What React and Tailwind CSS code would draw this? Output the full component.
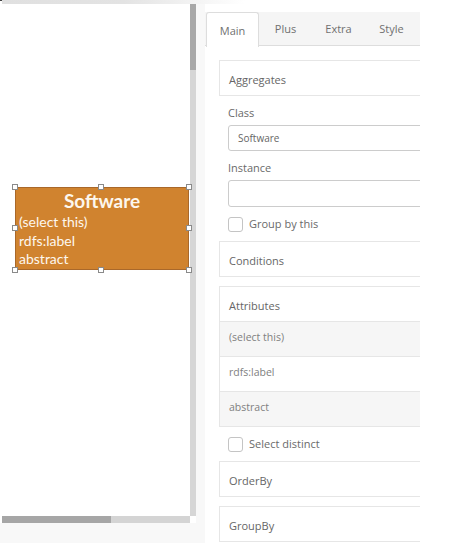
function Handle({ className }) {
  return <div className={`absolute w-[6px] h-[6px] bg-white border border-[#8a8a8a] ${className}`} />;
}

function Section({ label }) {
  return (
    <div className="h-[36px] w-[260px] border border-[#e6e6e6] bg-white flex items-center pl-[9px] pt-[5px] text-[11px] text-[#666]">
      {label}
    </div>
  );
}

function Check({ label }) {
  return (
    <div className="flex items-center h-[15px] pl-[9px]">
      <div className="w-[15px] h-[15px] border border-[#c4c4c4] rounded-[3px] bg-white" />
      <span className="ml-[6px] text-[11px] text-[#6a6a6a]">{label}</span>
    </div>
  );
}

export default function App() {
  const tabs = ['Main', 'Plus', 'Extra', 'Style'];
  const rows = ['(select this)', 'rdfs:label', 'abstract'];

  return (
    <div className="w-[459px] h-[551px] bg-white overflow-hidden font-['Open_Sans',sans-serif]">
      <div className="flex h-[4px]">
        <div className="w-[2px] h-[1px] bg-[#444]" />
        <div className="w-[243px] h-full bg-linear-to-r from-[#e0e0e0] via-[#e3e3e3] to-transparent" />
      </div>

      <div className="flex">
        {/* canvas column */}
        <div className="w-[205px] h-[539px] bg-[#f8f8f8] flex flex-col">
          <div className="flex h-[512px]">
            <div className="w-[190px] h-full bg-white relative">
              <div className="absolute left-[15px] top-[183px] w-[174px] h-[83px] bg-[#d0832f] border border-[#a9682a] font-['Lato',sans-serif] text-[#fdf7ee]">
                <div className="pt-[1px] leading-[23px] text-center text-[19px] font-bold">Software</div>
                <div className="pt-[1px] pl-[3px] text-[14px] leading-[18.5px]">
                  <div>(select this)</div>
                  <div>rdfs:label</div>
                  <div>abstract</div>
                </div>
                <Handle className="-left-[4px] -top-[4px]" />
                <Handle className="left-[82px] -top-[4px]" />
                <Handle className="-right-[4px] -top-[4px]" />
                <Handle className="-left-[4px] top-[37px]" />
                <Handle className="-right-[4px] top-[37px]" />
                <Handle className="-left-[4px] -bottom-[4px]" />
                <Handle className="left-[82px] -bottom-[4px]" />
                <Handle className="-right-[4px] -bottom-[4px]" />
              </div>
            </div>
            <div className="w-[6px] h-full flex flex-col">
              <div className="h-[66px] bg-[#a8a8a8]" />
              <div className="flex-1 bg-[#d6d6d6]" />
            </div>
          </div>
          <div className="flex h-[7px]">
            <div className="w-[2px] bg-white" />
            <div className="w-[109px] bg-[#a6a6a6]" />
            <div className="w-[79px] bg-[#d4d4d4]" />
            <div className="w-[6px] bg-white" />
          </div>
        </div>

        {/* properties panel */}
        <div className="w-[215px] h-[547px] pt-[8px] overflow-hidden">
          <div className="flex h-[34px] bg-[#f5f5f5] border-b border-[#dddddd]">
            {tabs.map((t, i) => (
              <div
                key={t}
                className={`w-[53px] flex items-center justify-center pt-[2px] text-[11px] text-[#707070] ${
                  i === 0 ? 'ml-[1px] bg-white border border-b-0 border-[#dddddd] rounded-t-[3px] h-[35px]' : ''
                }`}
              >
                {t}
              </div>
            ))}
          </div>

          <div className="pl-[14px] pt-[14px] flex flex-col">
            <Section label="Aggregates" />

            <div className="pl-[9px] mt-[9px] leading-[16px] text-[11px] text-[#6a6a6a]">Class</div>
            <div className="ml-[9px] mt-[4px] w-[240px] h-[26px] border border-[#cccccc] rounded-[3px] bg-white flex items-center pl-[9px] text-[10px] text-[#666]">
              Software
            </div>
            <div className="pl-[9px] mt-[9px] leading-[16px] text-[11px] text-[#6a6a6a]">Instance</div>
            <div className="ml-[9px] mt-[4px] w-[240px] h-[27px] border border-[#cccccc] rounded-[3px] bg-white" />

            <div className="mt-[10px]">
              <Check label="Group by this" />
            </div>

            <div className="mt-[9px]">
              <Section label="Conditions" />
            </div>

            <div className="mt-[9px] w-[260px] border border-[#e6e6e6] bg-white">
              <div className="h-[35px] flex items-center pl-[9px] pt-[4px] text-[11px] text-[#666] border-b border-[#e6e6e6]">
                Attributes
              </div>
              {rows.map((r, i) => (
                <div
                  key={r}
                  className={`h-[34px] flex items-center pl-[9px] pb-[3px] text-[10.5px] text-[#808080] ${
                    i % 2 === 0 ? 'bg-[#f6f6f6]' : 'bg-white'
                  } ${i < rows.length - 1 ? 'border-b border-[#e6e6e6] h-[35px]' : ''}`}
                >
                  {r}
                </div>
              ))}
            </div>

            <div className="mt-[10px]">
              <Check label="Select distinct" />
            </div>

            <div className="mt-[9px]">
              <Section label="OrderBy" />
            </div>
            <div className="mt-[9px]">
              <Section label="GroupBy" />
            </div>
          </div>
        </div>
      </div>
    </div>
  );
}
